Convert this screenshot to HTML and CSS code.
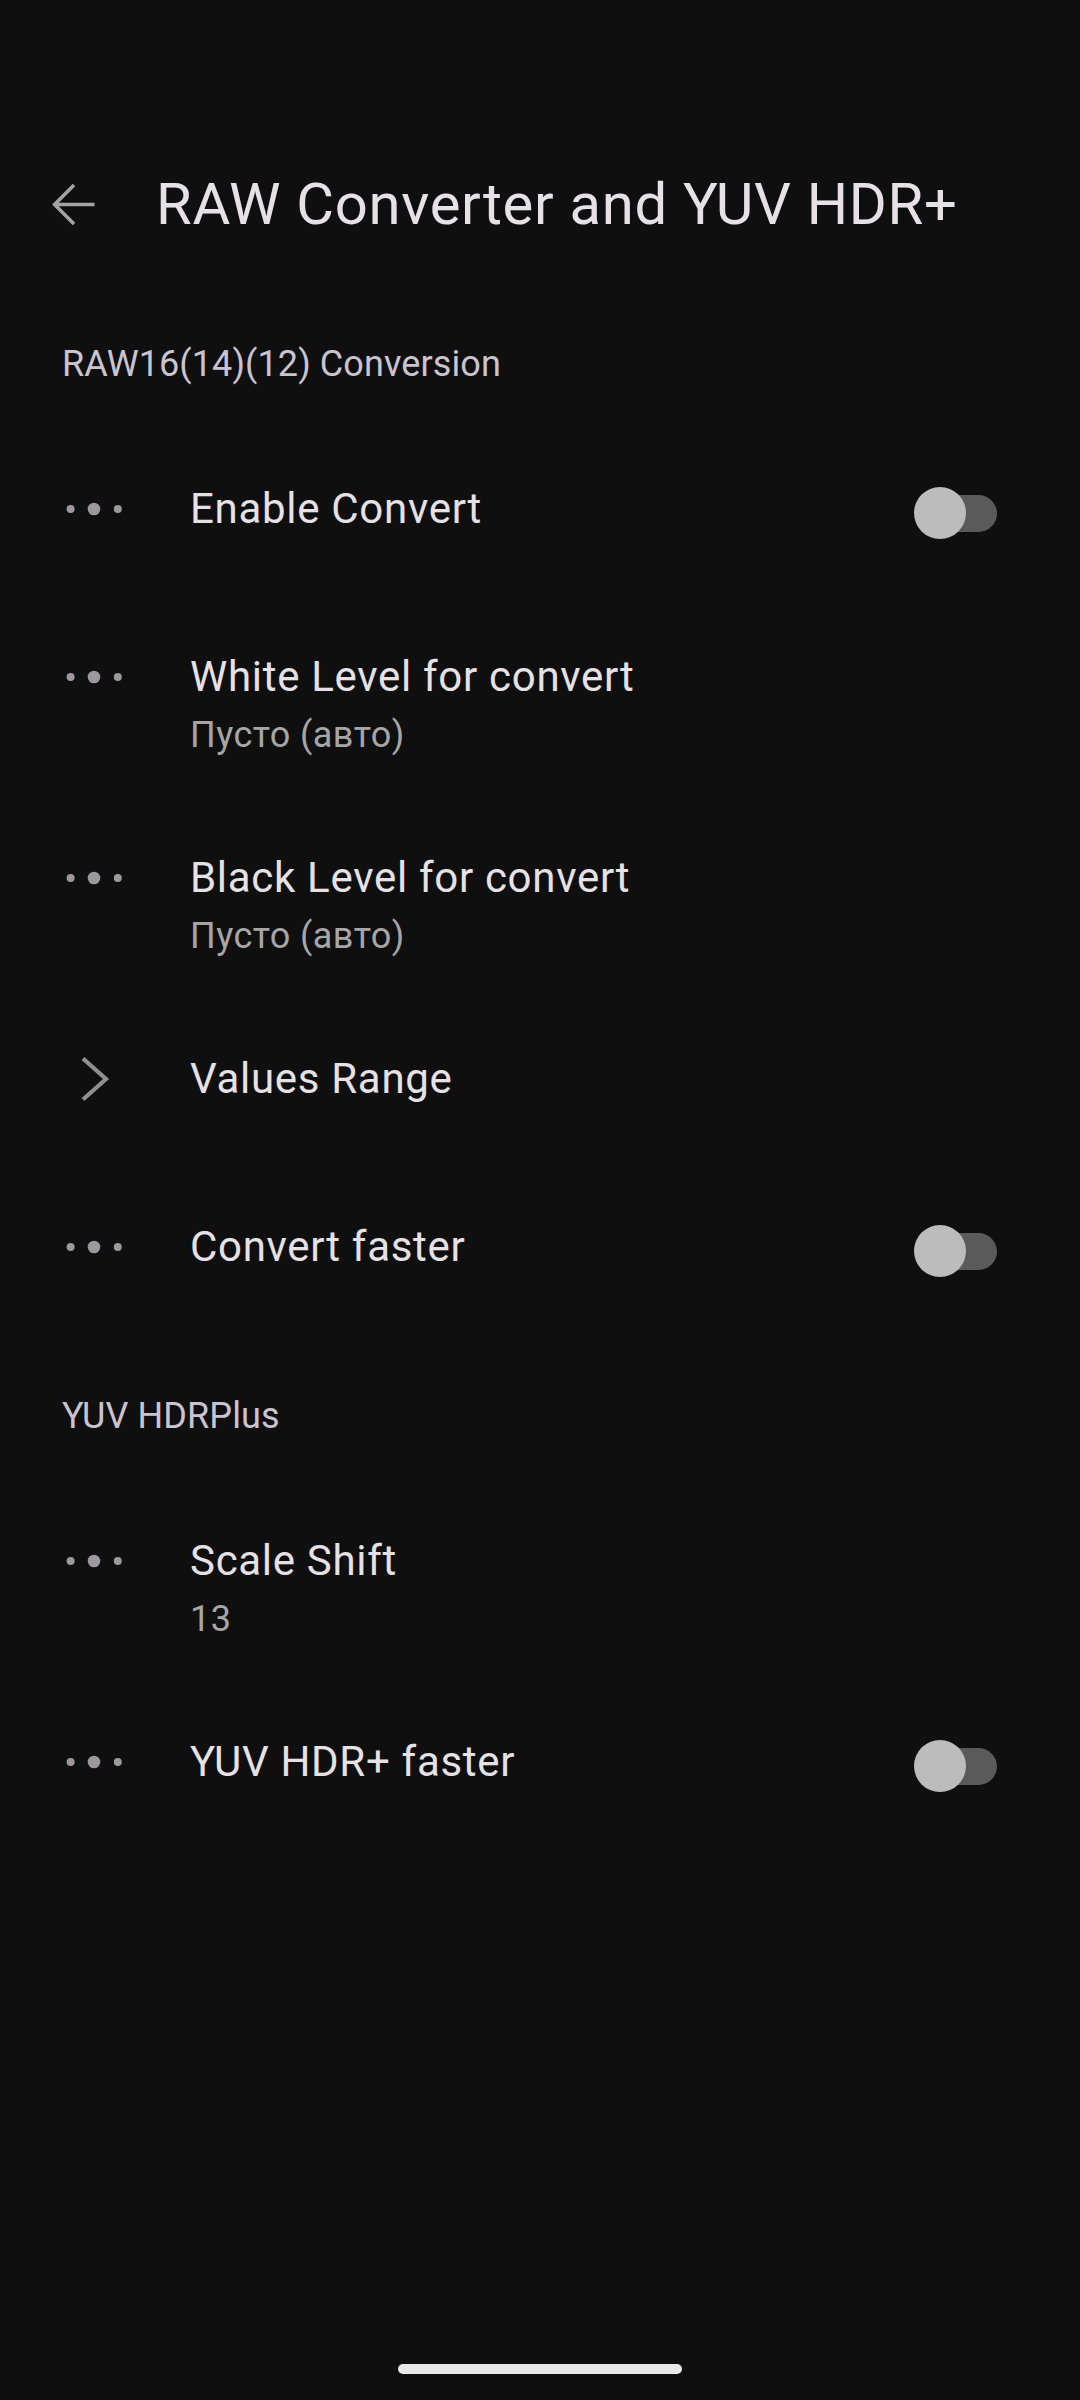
FILE: index.html
```html
<!DOCTYPE html>
<html lang="en">
<head>
<meta charset="utf-8">
<title>RAW Converter and YUV HDR+</title>
<link rel="stylesheet" href="styles.css">
</head>
<body>
<div class="screen">
  <header class="appbar">
    <div class="back">
      <svg viewBox="0 0 24 24" width="63" height="63" aria-hidden="true">
        <path d="M20 12H5.6M12.2 4.6L4.8 12l7.4 7.4" fill="none" stroke="#a3a3a3" stroke-width="1.35" stroke-linecap="butt" stroke-linejoin="miter"/>
      </svg>
    </div>
    <h1 class="title">RAW Converter and YUV HDR+</h1>
  </header>

  <section class="group">
    <h2 class="group-title">RAW16(14)(12) Conversion</h2>

    <div class="row">
      <div class="icon"><svg class="dots" viewBox="0 0 104 20" width="104" height="20"><circle cx="28.6" cy="10" r="4"/><circle cx="52" cy="10" r="6.3"/><circle cx="75.8" cy="10" r="4"/></svg></div>
      <div class="text"><div class="label">Enable Convert</div></div>
      <div class="switch"><span class="track"></span><span class="thumb"></span></div>
    </div>

    <div class="row">
      <div class="icon"><svg class="dots" viewBox="0 0 104 20" width="104" height="20"><circle cx="28.6" cy="10" r="4"/><circle cx="52" cy="10" r="6.3"/><circle cx="75.8" cy="10" r="4"/></svg></div>
      <div class="text"><div class="label">White Level for convert</div><div class="summary">Пусто (авто)</div></div>
    </div>

    <div class="row">
      <div class="icon"><svg class="dots" viewBox="0 0 104 20" width="104" height="20"><circle cx="28.6" cy="10" r="4"/><circle cx="52" cy="10" r="6.3"/><circle cx="75.8" cy="10" r="4"/></svg></div>
      <div class="text"><div class="label">Black Level for convert</div><div class="summary">Пусто (авто)</div></div>
    </div>

    <div class="row">
      <div class="icon"><svg viewBox="0 0 104 48" width="104" height="48"><polyline points="41,3.5 64,24 41,44.5" fill="none" stroke="#8f8f8f" stroke-width="4.2"/></svg></div>
      <div class="text"><div class="label">Values Range</div></div>
    </div>

    <div class="row">
      <div class="icon"><svg class="dots" viewBox="0 0 104 20" width="104" height="20"><circle cx="28.6" cy="10" r="4"/><circle cx="52" cy="10" r="6.3"/><circle cx="75.8" cy="10" r="4"/></svg></div>
      <div class="text"><div class="label">Convert faster</div></div>
      <div class="switch"><span class="track"></span><span class="thumb"></span></div>
    </div>
  </section>

  <section class="group">
    <h2 class="group-title">YUV HDRPlus</h2>

    <div class="row">
      <div class="icon"><svg class="dots" viewBox="0 0 104 20" width="104" height="20"><circle cx="28.6" cy="10" r="4"/><circle cx="52" cy="10" r="6.3"/><circle cx="75.8" cy="10" r="4"/></svg></div>
      <div class="text"><div class="label">Scale Shift</div><div class="summary">13</div></div>
    </div>

    <div class="row">
      <div class="icon"><svg class="dots" viewBox="0 0 104 20" width="104" height="20"><circle cx="28.6" cy="10" r="4"/><circle cx="52" cy="10" r="6.3"/><circle cx="75.8" cy="10" r="4"/></svg></div>
      <div class="text"><div class="label">YUV HDR+ faster</div></div>
      <div class="switch"><span class="track"></span><span class="thumb"></span></div>
    </div>
  </section>

  <div class="home-indicator"></div>
</div>
</body>
</html>
```

FILE: styles.css
```css
html, body {
  margin: 0;
  padding: 0;
  background: #0f0f0f;
}

body {
  font-family: Roboto, "Noto Sans", "Liberation Sans", sans-serif;
  color: #e6e1e5;
}

.screen {
  width: 1080px;
  height: 2400px;
  box-sizing: border-box;
  padding-top: 130px;
  display: flex;
  flex-direction: column;
  overflow: hidden;
}

/* App bar */
.appbar {
  height: 148px;
  display: flex;
  align-items: center;
  padding-left: 42px;
}

.back {
  width: 63px;
  height: 63px;
  display: flex;
}

.title {
  margin: 0 0 0 51px;
  font-size: 58px;
  font-weight: 400;
  line-height: 148px;
  color: #e6e1e5;
  letter-spacing: 0.7px;
  white-space: nowrap;
}

/* Groups */
.group {
  display: flex;
  flex-direction: column;
}

.group-title {
  margin: 0;
  padding: 60px 0 34px 62px;
  font-size: 36px;
  font-weight: 400;
  line-height: 52px;
  color: #cac4cf;
  letter-spacing: 0.1px;
}

/* Rows */
.row {
  display: flex;
  align-items: flex-start;
  box-sizing: border-box;
  min-height: 168px;
  padding: 55px 0 30px 42px;
}

.icon {
  width: 104px;
  height: 60px;
  flex: none;
  display: flex;
  align-items: center;
  justify-content: center;
}

.dots circle {
  fill: #9d98a0;
}

.text {
  flex: 1;
  margin-left: 44px;
  display: flex;
  flex-direction: column;
}

.label {
  font-size: 42px;
  line-height: 60px;
  color: #e6e1e5;
  letter-spacing: 0.7px;
  white-space: nowrap;
}

.summary {
  font-size: 36px;
  line-height: 56px;
  color: #a6a6a6;
  letter-spacing: 0.45px;
}

/* Switch (off) */
.switch {
  position: relative;
  flex: none;
  width: 83px;
  height: 52px;
  margin: 8px 83px 0 0;
}

.switch .track {
  position: absolute;
  right: 0;
  top: 7.5px;
  width: 74px;
  height: 37px;
  border-radius: 18.5px;
  background: #5a5a5a;
}

.switch .thumb {
  position: absolute;
  left: 0;
  top: 0;
  width: 52px;
  height: 52px;
  border-radius: 50%;
  background: #bcbcbc;
}

/* Gesture bar */
.home-indicator {
  margin: auto auto 26px;
  width: 284px;
  height: 10px;
  border-radius: 5px;
  background: #e8e8e8;
}
```
